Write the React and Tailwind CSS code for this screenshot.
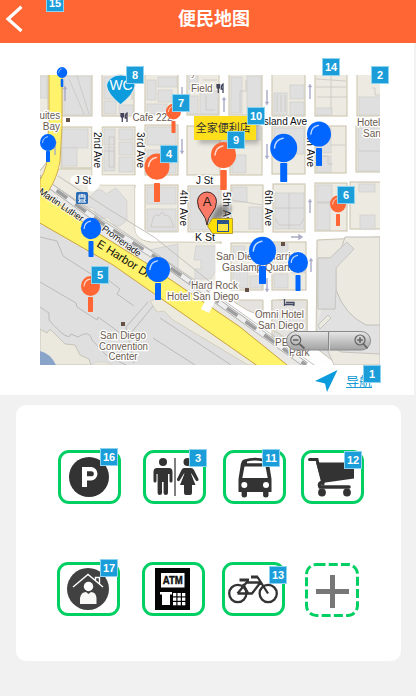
import React from "react";

const LATIN = '"Liberation Sans", Arial, sans-serif';
const HAN = '"Liberation Sans", "Noto Sans CJK SC", sans-serif';

function Badge({ n, at }) {
  return (
    <span className={`absolute z-10 flex h-[18px] w-[18px] items-center justify-center border border-[#8dd3f0] bg-[#1b9dd9] font-['Liberation_Sans',sans-serif] text-[11px] font-bold leading-none text-white ${at}`}>
      {n}
    </span>
  );
}

function Pin({ x, y, r, w, s, e, c }) {
  return (
    <g>
      <rect x={x - w / 2} y={s} width={w} height={e - s} fill={c} rx="0.7" />
      <ellipse cx={x} cy={y} rx={r} ry={r * 1.05} fill={c} />
      <path
        d={`M${x - r * 0.68} ${y} Q${x - r * 0.62} ${y - r * 0.62} ${x - r * 0.05} ${y - r * 0.72}`}
        fill="none" stroke="#fff" strokeOpacity="0.75" strokeWidth={r * 0.12} strokeLinecap="round"
      />
    </g>
  );
}

const BLUE = "#0066ff";
const ORANGE = "#ff6633";
const pins = [
  { x: 62, y: 72.5, r: 5.2, w: 2.6, s: 79, e: 87, c: BLUE },
  { x: 48, y: 142.5, r: 8, w: 4, s: 151, e: 162, c: BLUE },
  { x: 283.7, y: 148, r: 13.5, w: 7, s: 163, e: 182, c: BLUE },
  { x: 319, y: 134, r: 12, w: 6, s: 148, e: 166, c: BLUE },
  { x: 91, y: 228.5, r: 10.2, w: 5, s: 241, e: 257, c: BLUE },
  { x: 158, y: 269.5, r: 12, w: 6, s: 283, e: 300, c: BLUE },
  { x: 262.5, y: 251, r: 13.5, w: 7, s: 266, e: 284, c: BLUE },
  { x: 298, y: 262.5, r: 10, w: 5, s: 275, e: 291, c: BLUE },
  { x: 173.5, y: 111.5, r: 7.5, w: 4, s: 121, e: 133, c: ORANGE },
  { x: 157, y: 166.5, r: 12.5, w: 6, s: 183, e: 202, c: ORANGE },
  { x: 223.5, y: 155, r: 12.5, w: 6.5, s: 170, e: 190, c: ORANGE },
  { x: 338, y: 204, r: 8, w: 4, s: 214, e: 226, c: ORANGE },
  { x: 90.5, y: 286, r: 9.5, w: 5, s: 297, e: 312, c: ORANGE },
];

const blocks = [
  [36, 70, 12, 47], [62, 70, 30, 46], [102, 70, 32, 46], [145, 70, 33, 45], [187, 70, 32, 45], [229, 70, 33, 45], [272, 70, 33, 46], [315, 70, 32, 46], [357, 70, 28, 46],
  [61, 127, 31, 41], [102, 127, 33, 48], [145, 125, 33, 50], [187, 126, 33, 49], [230, 126, 32, 49], [272, 126, 33, 48], [315, 126, 31, 47], [356, 126, 29, 46],
  [145, 185, 33, 47], [188, 186, 33, 46], [231, 185, 32, 47], [273, 184, 32, 48], [315, 183, 32, 48], [350, 182, 35, 47],
  [231, 243, 32, 47], [272, 242, 34, 48], [272, 300, 35, 39],
];

const buildings = [
  [40, 76, 7, 22], [64, 76, 27, 39], [104, 77, 13, 22], [104, 101, 12, 13], [119, 105, 14, 9], [147, 80, 9, 20], [158, 90, 14, 12], [158, 77, 19, 10], [147, 104, 20, 10],
  [189, 76, 9, 13], [200, 91, 18, 23], [189, 96, 9, 18], [231, 77, 11, 36], [247, 76, 14, 37], [290, 85, 14, 14], [290, 102, 14, 13], [274, 93, 13, 22], [317, 108, 15, 7], [359, 97, 24, 18],
  [62, 129, 26, 19], [62, 148, 15, 18], [104, 129, 11, 16], [104, 147, 11, 24], [119, 129, 14, 11], [119, 142, 14, 13], [119, 157, 14, 15],
  [147, 127, 29, 18], [147, 150, 12, 23], [165, 150, 11, 23], [232, 128, 29, 12], [232, 155, 14, 18], [274, 128, 30, 26], [317, 128, 14, 25], [317, 156, 14, 16], [358, 128, 25, 43],
  [147, 187, 29, 17], [147, 209, 29, 22], [190, 188, 29, 42], [232, 187, 15, 15], [249, 207, 13, 22], [275, 193, 29, 36], [317, 185, 15, 17], [317, 202, 13, 28], [360, 215, 15, 14], [359, 184, 16, 8],
  [233, 246, 12, 12], [233, 270, 15, 18], [250, 276, 12, 12], [274, 244, 14, 14], [292, 261, 13, 12], [274, 274, 14, 14], [274, 303, 31, 34],
];

const roadArrows = [
  ["M65 101v-12", 65, 89, -1], ["M55 155v-12", 55, 143, -1], ["M182 87v12", 182, 99, 1], ["M182 139v12", 182, 151, 1], ["M224 112v-12", 224, 100, -1],
  ["M267 90v12", 267, 102, 1], ["M267 144v12", 267, 156, 1], ["M310 99v-12", 310, 87, -1], ["M310 213v-11", 310, 202, -1], ["M311 272v-11", 311, 261, -1], ["M267 278v11", 267, 289, 1],
];

function Label({ x, y, children, color = "#6b5b50", anchor = "start", size = 10, w }) {
  return (
    <text
      x={x} y={y} textAnchor={anchor} fontSize={size} fontFamily={LATIN} fill={color}
      stroke="#fff" strokeWidth="2.6" strokeLinejoin="round" paintOrder="stroke"
      textLength={w} lengthAdjust="spacingAndGlyphs"
    >
      {children}
    </text>
  );
}

function Avenue({ x, y, children, w = 36 }) {
  return (
    <text transform={`translate(${x} ${y}) rotate(90)`} fontSize="10" fontFamily={LATIN} fill="#111" stroke="#fff" strokeWidth="2.4" strokeLinejoin="round" paintOrder="stroke" textLength={w}>
      {children}
    </text>
  );
}

function Fork({ x, y }) {
  return <path d={`M${x} ${y}v3q0 1.5 1.3 1.5t1.3-1.5v-3M${x + 1.3} ${y}v9M${x + 6} ${y + 9}v-9q-1.8 1-1.8 5h1.8`} fill="none" stroke="#43455d" strokeWidth="1.3" />;
}

function CityMap() {
  return (
    <svg width="340" height="290" viewBox="40 75 340 290" className="block overflow-visible">
      <defs>
        <clipPath id="mapArea"><rect x="40" y="75" width="340" height="290" /></clipPath>
        <linearGradient id="metal" x1="0" x2="0" y1="0" y2="1">
          <stop offset="0" stopColor="#e8e8e8" /><stop offset="0.5" stopColor="#c4c4c4" /><stop offset="1" stopColor="#a2a2a2" />
        </linearGradient>
        <filter id="soft" x="-30%" y="-60%" width="160%" height="220%"><feGaussianBlur stdDeviation="2" /></filter>
      </defs>
      <g clipPath="url(#mapArea)">
        <rect x="40" y="75" width="340" height="290" fill="#fefefe" />
        <g fill="#edeae1" stroke="#cdc5b0" strokeWidth="1.1">
          {blocks.map(([x, y, w, h], i) => <rect key={i} x={x} y={y} width={w} height={h} />)}
          <path d="M56 169h36v10l9 6h34v42q0 12 15 15h71v58l-20-12-61-39-60-32-46-40q14-14 22-30z" />
        </g>
        <g fill="#dfdfdf" stroke="#cfcdca" strokeWidth="0.7">
          {buildings.map(([x, y, w, h], i) => <rect key={i} x={x} y={y} width={w} height={h} />)}
          <path d="M91 196q6-8 11-6l4 4 10-6 11 13v19l-7 6-4 0-8-9-10 3-4-12-10-2 3-6z" />
          <path d="M149 250l29-6v36l-22-17zM196 246h23v19l-8 14h-16v-10h6v-9h-7z" />
        </g>
        <g fill="none" stroke="#c9c7c3" strokeWidth="0.8">
          <path d="M69 79l15 35M77 76l12 38M123 88h9v12M109 81v11M203 80h14M206 95v15h9M246 80v11h-6v22M277 95v17M281 95v17M285 95v17M316 79l30 2M316 87h30M331 76v33M317 97h30M372 88h3v7h8M109 137v30h5v-30zM105 151h9M151 155h6v8h16M275 208h28M289 193v36M276 219l3 6h21l4-7M317 203h31M323 156h5v8h5M232 200l30 5M331 145h14M359 151h23M153 218q2-5 6-2 3-7 6 0 4-2 6 4l3 7h-23z" />
        </g>
        <path d="M139.500 188v40q0 9 15 9h64" fill="none" stroke="#fff" strokeWidth="8.500" />
        <path d="M75 180h61" stroke="#fff" strokeWidth="9" strokeLinecap="round" />
        <path d="M97 120v58q0 5-5 9" fill="none" stroke="#fff" strokeWidth="9" strokeLinecap="round" />
        {/* coast and convention grounds */}
        <path d="M40 220l73 45 53 37 92 63H40z" fill="#dfdfdf" />
        <path d="M150 301l14-5 96 69h-12l-75-45-9-9-7 1z" fill="#ece9df" stroke="#cdc5b0" strokeWidth="0.7" />
        <g fill="none" stroke="#bcbbb8" strokeWidth="1">
          <path d="M40 237l17 4 6 15 42 27 2-4 13 10-3 5 17 12M40 282l36 21 1 4 20 13 1-3 29 21M40 307l9 6v7q20 23 22 14l7 3q12-8 14 3l14 15 22 11M148 302l-22 25 8 36M153 306l-22 27M160 318l71 47M153 338l42 27" />
        </g>
        <path d="M40 329l7 4q3-6 6-1l12 12 10 1 5 10 9 4 2 6H40z" fill="#ebe8de" stroke="#c7c4bc" strokeWidth="1" />
        <path d="M40 351q10 2 16 14H40z" fill="#89a4c8" />
        <path d="M91 365l5-3q11-1 16 3z" fill="#e9e6dd" stroke="#d0cdc4" strokeWidth="0.6" />
        {/* rail corridor */}
        <path d="M40 180l58 42 54 35 60 42 93 66H278L40 198z" fill="#e9e8e4" />
        <path d="M38 177l62 45 54 34 56 40 96 69" fill="none" stroke="#a6a6a6" strokeWidth="6" />
        <path d="M38 177l62 45 54 34 56 40 96 69" fill="none" stroke="#eee" strokeWidth="4.6" />
        <path d="M38 177l62 45 54 34 56 40 96 69" fill="none" stroke="#9e9e9e" strokeWidth="3.5" strokeDasharray="13 10" />
        <path d="M58 176l49 32 47 29 60 48M52 184l84 56 69 47 112 80" fill="none" stroke="#c3c1bc" strokeWidth="1" />
        {/* yellow arterial roads */}
        <path d="M49 70h13v57l-2 34q-2 15-12 31l-8 7v-19q9-15 7-29l2-31z" fill="#fff36b" stroke="#d1ad51" strokeWidth="1" />
        <path d="M38 188l58 44 50 31 59 40 35 24 52 42h-30l-96-67-53-37-75-43z" fill="#fff36b" stroke="#cda23d" strokeWidth="1" />
        <path d="M205 311l15-29v-38" fill="none" stroke="#fff" strokeWidth="9" />
        <path d="M226 235v50q0 11-8 11h60" fill="none" stroke="#fff" strokeWidth="8" />
        <path d="M231 300h32v17l-16-7zM272 300h35v39h-20l-15-10z" fill="#e4e3df" stroke="#cdc5b0" />
        {/* eastern parcels */}
        <path d="M317 240l63-3v128h-42l-22-17z" fill="#e1e1e1" stroke="#cdc5b0" />
        <path d="M318 241l60-3-32 0-8 22-20 60z" fill="#ece9e1" />
        <path d="M318 258h12l17-16 7 7-19 20v40h-17z" fill="#dadada" stroke="#c8c7c3" />
        <path d="M380 237h-35l-9 29v24q9 25 30 35h14z" fill="#ece9e1" stroke="#c2c0bb" />
        <path d="M318 258h12l17-16 7 7-18 19v22l-1 19h-17z" fill="#dddddd" stroke="#c8c7c3" />
        <path d="M318 325l10-10 3 3-11 11zM324 342l17 10 39 2v11h-46z" fill="#ece9e1" stroke="#c5c3bd" />
        {/* one-way marks */}
        <g stroke="#aaaac6" fill="#aaaac6" strokeWidth="1.4">
          {roadArrows.map(([d, x, y, v], i) => <g key={i}><path d={d} /><path d={`M${x - 1.7} ${y}h3.4L${x} ${y + v * 3}z`} strokeWidth="0.5" /></g>)}
          <path d="M291 237h9M299 235l3 2-3 2z" />
        </g>
        <Label x={60} y={119} anchor="end" w={27}>Suites</Label>
        <Label x={60} y={130} anchor="end">Bay</Label>
        <rect x="66" y="118" width="4" height="4" fill="#655145" />
        <Fork x={121} y={113} />
        <Label x={132.5} y={121} w={40}>Cafe 222</Label>
        <Label x={191} y={76} color="#887b70">y</Label>
        <Label x={191} y={91.5}>Field</Label>
        <Fork x={217} y={84} />
        <Avenue x={93.5} y={132}>2nd Ave</Avenue>
        <Avenue x={136.5} y={132}>3rd Ave</Avenue>
        <Avenue x={179.5} y={190}>4th Ave</Avenue>
        <Avenue x={222.5} y={192}>5th Ave</Avenue>
        <Avenue x={264.5} y={190}>6th Ave</Avenue>
        <Avenue x={306.5} y={131}>7th Ave</Avenue>
        <Label x={307} y={124.5} anchor="end" color="#111" w={46}>Island Ave</Label>
        <Label x={75} y={183.5} color="#111" w={16}>J St</Label>
        <Label x={196} y={183.5} color="#111" w={17}>J St</Label>
        <Label x={195} y={241} color="#111" w={20}>K St</Label>
        <Label x={357} y={125.5}>Hotel</Label>
        <Label x={363} y={136.5}>San</Label>
        <g fontFamily={LATIN} fill="#111" stroke="#fff" strokeOpacity="0.75" strokeWidth="1.6" paintOrder="stroke">
          <text transform="translate(38 193) rotate(34)" fontSize="9.500" textLength="72">Martin Luther King</text>
          <text transform="translate(101 230) rotate(36)" fontSize="9.500" textLength="46">Promenade</text>
          <text transform="translate(96 246) rotate(32)" fontSize="11.500" textLength="61" strokeOpacity="0">E Harbor Dr</text>
        </g>
        <rect x="76" y="192" width="12" height="12" rx="1.5" fill="#2b6cb5" />
        <path d="M79 195h6v5h-6zM79 197h6M82 194v3M78 202h8M80 200l-1 2M84 200l1 2" fill="none" stroke="#fff" strokeWidth="1" />
        <rect x="281" y="242" width="4" height="4" fill="#655145" />
        <Label x={216} y={259.5} w={86}>San Diego Marriott</Label>
        <Label x={222} y={270.5} w={77}>Gaslamp Quarter</Label>
        <Label x={191} y={288.5} w={47}>Hard Rock</Label>
        <Label x={167} y={299.5} w={72}>Hotel San Diego</Label>
        <rect x="245" y="288" width="4" height="4" fill="#655145" />
        <path d="M284.5 299v7M284.5 304.5h9v1.5M286 302.5h8v3" fill="none" stroke="#454a65" strokeWidth="1.3" />
        <Label x={255} y={318} w={49}>Omni Hotel</Label>
        <Label x={258} y={329} w={46}>San Diego</Label>
        <Label x={275} y={345.5}>PETCO</Label>
        <Label x={289} y={356}>Park</Label>
        <rect x="121" y="322" width="4" height="4" fill="#655145" />
        <Label x={123} y={338.5} anchor="middle" w={46}>San Diego</Label>
        <Label x={123.5} y={349.5} anchor="middle" w={49}>Convention</Label>
        <Label x={123} y={360} anchor="middle" w={29}>Center</Label>
      </g>

      {/* place markers */}
      <path d="M106.500 86a14.200 11 0 0 1 28.500 0q-1 8-14.500 19Q107.500 94 106.500 86z" fill="#0c9bdc" stroke="#dce6e8" strokeWidth="1.2" />
      <text x="109.500" y="90" fontSize="14" fontFamily={LATIN} fill="#fff" textLength="23">WC</text>
      {pins.slice(0, 8).map((p, i) => <Pin key={i} {...p} />)}
      <rect x="199" y="121" width="60" height="23" fill="#777" opacity="0.45" filter="url(#soft)" />
      <rect x="194" y="116" width="62" height="24" fill="#ffdf1c" />
      <text x="195.800" y="132" fontSize="11" fontFamily={HAN} fill="#333" textLength="55">全家便利店</text>
      {pins.slice(8).map((p, i) => <Pin key={i} {...p} />)}
      <path d="M208 224l8-16q8-6 15-1l-3 8z" fill="#555" opacity="0.65" filter="url(#soft)" />
      <path d="M207 225q-.7-7-5-12-4.500-5-4.500-11.500a9.500 9.500 0 0 1 19 0q0 6.500-4.500 11.500-4.300 5-5 12z" fill="#fa7a67" stroke="#291815" strokeWidth="0.9" />
      <text x="207" y="206" textAnchor="middle" fontSize="13" fontFamily={LATIN} fill="#291815">A</text>
      <path d="M207.500 226l5-7.500h20v15h-20z" fill="#ffdf00" stroke="#a98f22" strokeWidth="0.8" />
      <rect x="217.500" y="220.500" width="11" height="11" fill="#ffe645" stroke="#2c5387" />
      <path d="M217 220h12v4h-12z" fill="#2c5387" />

      {/* zoom control */}
      <rect x="286.500" y="331.500" width="84" height="18.500" rx="9.200" fill="url(#metal)" stroke="#8a8a8a" />
      <path d="M328.500 332v18" stroke="#888" /><path d="M329.500 332v18" stroke="#d6d6d6" />
      <g fill="none" stroke="#626262" strokeWidth="1.2">
        <circle cx="295.700" cy="340" r="5" /><path d="M293 340h5.500M299.500 344l5 4.500" strokeWidth="1.700" />
        <circle cx="360" cy="340" r="5" /><path d="M357.200 340h5.600M360 337.200v5.600M363.500 344l4 4.500" strokeWidth="1.600" />
      </g>
    </svg>
  );
}

const INK = "#333";

const Parking = () => (
  <svg width="40" height="40" viewBox="0 0 40 40" className="mr-[2px]">
    <circle cx="20" cy="20" r="20" fill={INK} />
    <path d="M13 10h9.500a6.800 6.800 0 0 1 0 13.500H18V30h-5zM18 14.200v5.100h4.300a2.500 2.500 0 0 0 0-5.100z" fill="#fff" fillRule="evenodd" />
  </svg>
);

const Restroom = () => (
  <svg width="46" height="40" viewBox="0 0 46 40" fill={INK} className="ml-[2px]">
    <circle cx="10" cy="5" r="4" />
    <path d="M4 11h12q3.500 0 3.500 4v9q0 1.500-1.500 1.500T16.500 24v-7H15v19q0 2-2.200 2t-2.200-2V25H9v11q0 2-2.200 2t-2.200-2V17H3.500v7q0 1.500-1.500 1.500T.5 24v-9q0-4 3.500-4z" />
    <path d="M21.500 1h1v38h-1z" fill="#000" />
    <circle cx="34.500" cy="5" r="4" />
    <path d="M31 11h7q2 0 3 2l4.500 9q.5 1.500-1 2t-2-1l-4-6.500h-.5L42.500 28H39v8q0 2-2 2h-4q-2 0-2-2v-8h-4l4.500-11.500H31L27 23q-.5 1.500-2 1t-1-2l4.500-9q1-2 2.500-2z" />
  </svg>
);

const Bus = () => (
  <svg width="34" height="41" viewBox="0 0 34 41">
    <path d="M6 2.500Q17-1 28 2.500q3 1 3.500 7l2 12.500v13h-3v3.500q0 2-2.700 2t-2.700-2V35H9v3.500q0 2-2.700 2t-2.700-2V35H.5V22l2-12.500Q3 3.500 6 2.500z" fill={INK} />
    <path d="M6.500 9.500h21l2.200 11.500H4.300z" fill="#fff" />
    <path d="M9 4.500q8-1.800 16 0v1.700H9z" fill="#fff" />
    <circle cx="6.300" cy="28" r="3" fill="#fff" /><circle cx="28" cy="28" r="3" fill="#fff" />
  </svg>
);

const Cart = () => (
  <svg width="48" height="40" viewBox="0 0 48 40" className="mr-[3px]">
    <path d="M2.500 2.500h7.500l6 24.500" fill="none" stroke={INK} strokeWidth="3" strokeLinecap="round" />
    <path d="M9 5.500h38V21.500L15 26z" fill={INK} />
    <path d="M16 25q-5 1-3 5h29" fill="none" stroke={INK} strokeWidth="3.600" strokeLinecap="round" />
    <circle cx="15" cy="35.500" r="3.900" fill={INK} /><circle cx="40" cy="35.500" r="3.900" fill={INK} />
  </svg>
);

const Home = () => (
  <svg width="42" height="42" viewBox="0 0 42 42" className="mr-[2px]">
    <circle cx="21" cy="21" r="21" fill="#414141" />
    <path d="M6 19L21 6.500 36 19M28.500 12.500V9.500h4v6" fill="none" stroke="#fff" strokeWidth="1.400" />
    <circle cx="21.500" cy="18.500" r="4.700" fill="#fff" />
    <path d="M13 36v-6q1-6 6-6l2.500 2 2.500-2q5 0 5.500 6v6z" fill="#f8f8f6" />
  </svg>
);

const Atm = () => (
  <svg width="35" height="42" viewBox="0 0 35 42" className="mr-[2px]">
    <path d="M0 0h35v42H0z" fill="#050505" /><path d="M6 5h23.500v14.500H6z" fill="#fff" />
    <text x="17.700" y="15.500" textAnchor="middle" fontSize="10" fontWeight="700" fontFamily={LATIN} fill="#111" stroke="#111" strokeWidth=".4" textLength="20" lengthAdjust="spacingAndGlyphs">ATM</text>
    <path d="M5 24h12v2.500h-2V37H7V26.500H5z" fill="#fff" />
    <g fill="#fff">
      {[0, 1, 2].map((r) => [0, 1, 2].map((c) => <rect key={`${r}-${c}`} x={18 + c * 4.5} y={25 + r * 4.5} width="3.3" height="3.3" />))}
    </g>
  </svg>
);

const Bike = () => (
  <svg width="50" height="29" viewBox="0 0 50 29" className="mr-[2px]">
    <g fill="none" stroke={INK} strokeWidth="2.300" strokeLinejoin="round">
      <circle cx="9.800" cy="18.500" r="8.600" /><circle cx="40.200" cy="18.500" r="8.600" />
      <path d="M9.500 18.500h14.500l8.500-11H18.500l-9 11M15 9l5 9M19 4.500v3M29.500 2l10.500 16.500" />
    </g>
    <path d="M11.500 5h9.500M23 2h7" stroke={INK} strokeWidth="2.800" />
  </svg>
);

const tile = "relative flex h-[54px] w-[63px] shrink-0 items-center justify-center rounded-[11px] border-[3px] border-[#00cf63] bg-white";

export default function App() {
  return (
    <div className="flex h-[696px] w-[416px] flex-col overflow-hidden bg-[#f1f1f1] font-['Liberation_Sans','Noto_Sans_CJK_SC',sans-serif]">
      <header className="relative flex h-[43px] shrink-0 items-center bg-[#ff6633]">
        <svg width="20" height="30" viewBox="0 0 20 30" className="ml-[4px] mt-[-6px]">
          <path d="M17.500 2.800L4 15l13.500 12" fill="none" stroke="#fff" strokeWidth="3.200" />
        </svg>
        <h1 className="ml-[154px] mt-[-6px] text-[18px] font-bold leading-6 text-white">便民地图</h1>
        <Badge n={15} at="left-[46px] top-[-6px]" />
      </header>

      <section className="relative flex h-[352px] w-[414px] shrink-0 flex-col bg-white pl-[40px] pt-[32px]">
        <CityMap />
        <div className="flex pl-[275px] pt-[4px]">
          <svg width="23" height="24" viewBox="0 0 23 24"><path d="M22.500 1L0 12l10 2.500 2 8.500z" fill="#0c9bdc" /></svg>
          <a className="ml-[8px] mt-[3px] text-[13px] leading-5 text-[#169bd5] underline">导航</a>
        </div>
        <Badge n={8} at="left-[126px] top-[23px]" />
        <Badge n={14} at="left-[322px] top-[15px]" />
        <Badge n={2} at="left-[371px] top-[23px]" />
        <Badge n={7} at="left-[172px] top-[51px]" />
        <Badge n={10} at="left-[247px] top-[64px]" />
        <Badge n={9} at="left-[227px] top-[88px]" />
        <Badge n={4} at="left-[160px] top-[102px]" />
        <Badge n={6} at="left-[337px] top-[143px]" />
        <Badge n={5} at="left-[91px] top-[223px]" />
        <Badge n={1} at="left-[363px] top-[322px]" />
      </section>

      <section className="ml-[16px] mt-[10px] flex h-[256px] w-[385px] shrink-0 flex-col rounded-[10px] bg-white pt-[45px]">
        <div className="flex pl-[42px]">
          <div className={tile}><Parking /><Badge n={16} at="left-[39px] top-[-5px]" /></div>
          <div className={`${tile} ml-[22px]`}><Restroom /><Badge n={3} at="left-[43px] top-[-4px]" /></div>
          <div className={`${tile} ml-[17px]`}><Bus /><Badge n={11} at="left-[36px] top-[-4px]" /></div>
          <div className={`${tile} ml-[15px]`}><Cart /><Badge n={12} at="left-[40px] top-[-2px]" /></div>
        </div>
        <div className="mt-[58px] flex pl-[41px]">
          <div className={tile}><Home /><Badge n={17} at="left-[40px] top-[-6px]" /></div>
          <div className={`${tile} ml-[22px]`}><Atm /></div>
          <div className={`${tile} ml-[17px]`}><Bike /><Badge n={13} at="left-[44px] top-[1px]" /></div>
          <svg width="54" height="54" viewBox="0 0 54 54" className="ml-[20px] mt-[1px]">
            <rect x="1.500" y="1.500" width="51" height="51" rx="10" fill="none" stroke="#00cf63" strokeWidth="3" strokeDasharray="9 3.230" />
            <path d="M11 28.500h33M27.500 12v33" stroke="#777" strokeWidth="5" />
          </svg>
        </div>
      </section>
    </div>
  );
}
